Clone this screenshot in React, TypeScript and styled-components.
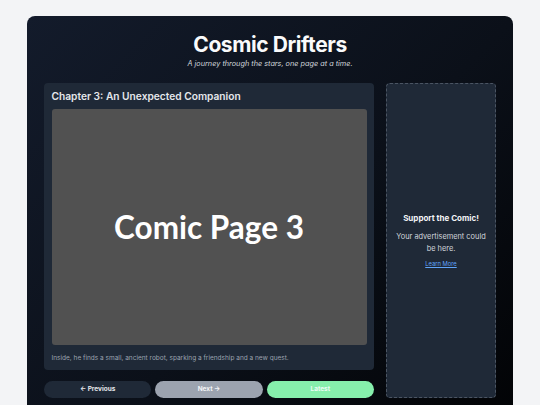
import React from "react";
import styled, { createGlobalStyle } from "styled-components";

const Global = createGlobalStyle`
  html, body { margin: 0; padding: 0; }
  body {
    background: #f3f4f6;
    font-family: Inter, "Noto Sans", sans-serif;
    -webkit-font-smoothing: antialiased;
  }
`;

const Page = styled.div`
  padding-top: 16px;
`;

const Card = styled.main`
  width: 90%;
  margin: 0 auto;
  box-sizing: border-box;
  padding: 15px 17px 24px;
  border-radius: 8px;
  background: linear-gradient(135deg, #131b2b 0%, #0b1019 55%, #020305 100%);
  color: #fff;
`;

const Header = styled.header`
  text-align: center;
  margin-bottom: 15px;
`;

const Title = styled.h1`
  margin: 0;
  font-size: 21px;
  line-height: 27px;
  font-weight: 700;
  letter-spacing: -0.02em;
  color: #f9fafb;
`;

const Subtitle = styled.p`
  margin: 1px 0 0;
  font-size: 7.3px;
  line-height: 9px;
  font-style: italic;
  color: #d1d5db;
`;

const Layout = styled.div`
  display: grid;
  grid-template-columns: 3fr 1fr;
  gap: 12px;
`;

const MainCol = styled.div`
  display: flex;
  flex-direction: column;
  gap: 11px;
`;

const Panel = styled.section`
  background: #1f2937;
  border-radius: 4px;
  padding: 7px 7.5px 7.5px;
`;

const ChapterTitle = styled.h2`
  margin: 0 0 7px;
  font-size: 10.2px;
  line-height: 12px;
  font-weight: 600;
  color: #e5e7eb;
`;

const ComicImage = styled.div`
  aspect-ratio: 4 / 3;
  background: #515151;
  border-radius: 3px;
  display: flex;
  align-items: center;
  justify-content: center;
  font-family: Lato, sans-serif;
  font-size: 31.5px;
  font-weight: 700;
  color: #fff;
`;

const Caption = styled.p`
  margin: 9px 0 0;
  font-size: 6.5px;
  line-height: 8px;
  color: #9ca3af;
`;

const Nav = styled.nav`
  display: grid;
  grid-template-columns: repeat(3, 1fr);
  gap: 4px;
`;

const NavButton = styled.button<{ $bg: string; $fg: string }>`
  height: 17px;
  border: 0;
  border-radius: 999px;
  background: ${(p) => p.$bg};
  color: ${(p) => p.$fg};
  font-family: Inter, sans-serif;
  font-size: 6.5px;
  font-weight: 700;
  padding: 0;
`;

const Ad = styled.aside`
  background: #1f2937;
  border: 1px dashed #4b5563;
  border-radius: 4px;
  display: flex;
  flex-direction: column;
  align-items: center;
  justify-content: center;
  text-align: center;
  padding: 0 8px;
`;

const AdTitle = styled.h3`
  margin: 0 0 8px;
  font-size: 8px;
  font-weight: 700;
  color: #f3f4f6;
`;

const AdText = styled.p`
  margin: 0 0 6px;
  font-size: 7.4px;
  line-height: 11.5px;
  color: #d1d5db;
`;

const AdLink = styled.a`
  font-size: 5.8px;
  color: #60a5fa;
  text-decoration: underline;
`;

export default function App() {
  return (
    <>
      <Global />
      <Page>
        <Card>
          <Header>
            <Title>Cosmic Drifters</Title>
            <Subtitle>A journey through the stars, one page at a time.</Subtitle>
          </Header>
          <Layout>
            <MainCol>
              <Panel>
                <ChapterTitle>Chapter 3: An Unexpected Companion</ChapterTitle>
                <ComicImage>Comic Page 3</ComicImage>
                <Caption>
                  Inside, he finds a small, ancient robot, sparking a friendship and a new quest.
                </Caption>
              </Panel>
              <Nav>
                <NavButton $bg="#1f2937" $fg="#e5e7eb">← Previous</NavButton>
                <NavButton $bg="#9ca3af" $fg="#f3f4f6">Next →</NavButton>
                <NavButton $bg="#86efac" $fg="#ecfdf5">Latest</NavButton>
              </Nav>
            </MainCol>
            <Ad>
              <AdTitle>Support the Comic!</AdTitle>
              <AdText>Your advertisement could be here.</AdText>
              <AdLink href="#">Learn More</AdLink>
            </Ad>
          </Layout>
        </Card>
      </Page>
    </>
  );
}
